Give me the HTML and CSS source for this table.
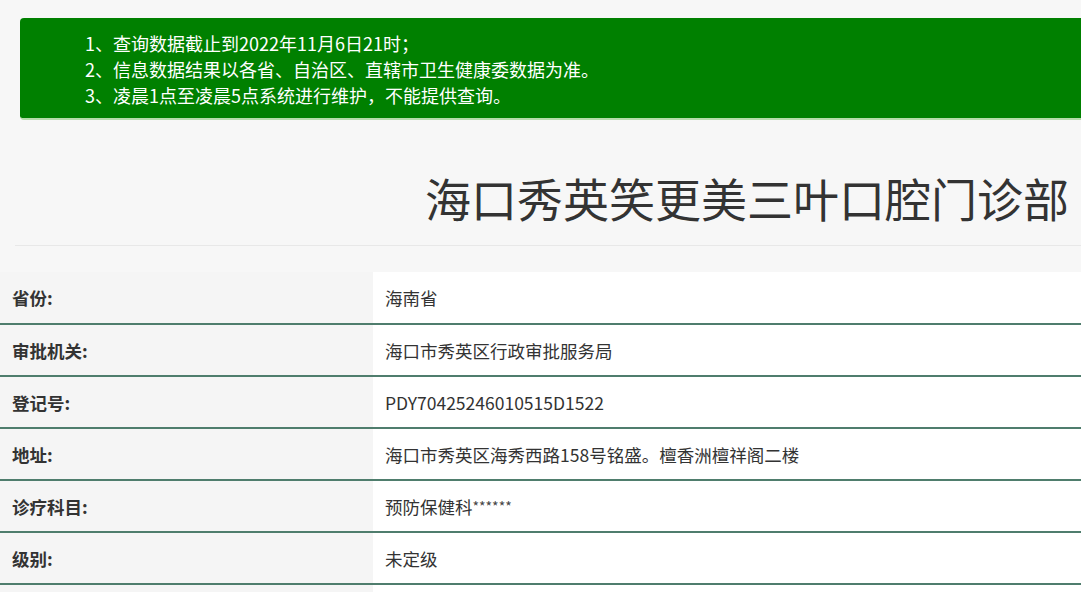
FILE: index.html
```html
<!DOCTYPE html>
<html lang="zh-CN">
<head>
<meta charset="utf-8">
<title>查询结果</title>
<link rel="stylesheet" href="styles.css">
</head>
<body>
<div class="notice">
  <p>1、查询数据截止到2022年11月6日21时；</p>
  <p>2、信息数据结果以各省、自治区、直辖市卫生健康委数据为准。</p>
  <p>3、凌晨1点至凌晨5点系统进行维护，不能提供查询。</p>
</div>
<div class="header">
  <h1 class="title">海口秀英笑更美三叶口腔门诊部</h1>
</div>
<table class="info">
  <tr><th>省份:</th><td>海南省</td></tr>
  <tr><th>审批机关:</th><td>海口市秀英区行政审批服务局</td></tr>
  <tr><th>登记号:</th><td>PDY70425246010515D1522</td></tr>
  <tr><th>地址:</th><td>海口市秀英区海秀西路158号铭盛。檀香洲檀祥阁二楼</td></tr>
  <tr><th>诊疗科目:</th><td>预防保健科<span class="stars">******</span></td></tr>
  <tr><th>级别:</th><td>未定级</td></tr>
  <tr><th>&nbsp;</th><td>&nbsp;</td></tr>
</table>
</body>
</html>
```
FILE: styles.css
```css
html, body {
  margin: 0;
  padding: 0;
}
body {
  background: #f7f7f7;
  font-family: "Noto Sans CJK SC", "Noto Sans", sans-serif;
  color: #333;
  overflow: hidden;
}
.notice {
  margin: 18px 0 0 20px;
  height: 102px;
  box-sizing: border-box;
  padding: 12px 0 0 65px;
  background: #008000;
  border-bottom: 2px solid #b5dcaa;
  border-radius: 4px 0 0 4px;
  color: #fff;
  font-size: 18px;
  line-height: 26px;
}
.notice p {
  margin: 0;
}
.header {
  margin: 0 0 0 15px;
  height: 126px;
  box-sizing: border-box;
  border-bottom: 1px solid #e8e8e8;
  display: flex;
  justify-content: flex-end;
  align-items: flex-end;
}
.title {
  margin: 0 12px 18px 0;
  font-size: 46px;
  font-weight: 400;
  line-height: 60px;
  color: #333;
}
.info {
  margin-top: 26px;
  width: 100%;
  border-collapse: collapse;
  font-size: 17.5px;
}
.info tr {
  height: 52px;
  border-bottom: 2px solid #4f7d6d;
}
.info th {
  width: 373px;
  box-sizing: border-box;
  padding: 0 0 0 12px;
  text-align: left;
  font-weight: 700;
  background: #f5f5f5;
  color: #333;
}
.info td {
  padding: 0 0 0 12px;
  background: #fff;
  color: #333;
}
.num {
  letter-spacing: 0.5px;
}
.stars {
  font-size: 14px;
  vertical-align: 2px;
  color: #444;
}
```
